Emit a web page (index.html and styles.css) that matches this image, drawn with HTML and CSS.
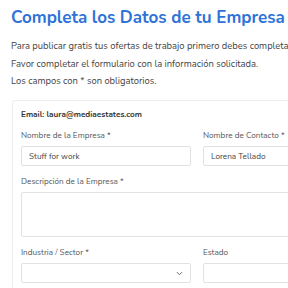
FILE: index.html
```html
<!DOCTYPE html>
<html lang="es">
<head>
    <meta charset="UTF-8">
    <meta name="viewport" content="width=device-width, initial-scale=1.0">
    <title>Completa los Datos de tu Empresa</title>
    <link rel="stylesheet" href="styles.css">
</head>
<body>
    <div id="page">
        <h1 class="page-title">Completa los Datos de tu Empresa</h1>
        <div class="intro">
            <p>Para publicar gratis tus ofertas de trabajo primero debes completar los datos de tu empresa.</p>
            <p>Favor completar el formulario con la información solicitada.</p>
            <p>Los campos con * son obligatorios.</p>
        </div>

        <div class="card">
            <div class="email">Email: laura@mediaestates.com</div>

            <div class="row">
                <div class="field">
                    <label>Nombre de la Empresa *</label>
                    <div class="input">Stuff for work</div>
                </div>
                <div class="field">
                    <label>Nombre de Contacto *</label>
                    <div class="input">Lorena Tellado</div>
                </div>
            </div>

            <div class="field">
                <label>Descripción de la Empresa *</label>
                <div class="input textarea"></div>
            </div>

            <div class="row">
                <div class="field">
                    <label>Industria / Sector *</label>
                    <div class="input select">
                        <svg class="chevron" width="7" height="5" viewBox="0 0 7 5">
                            <path d="M1 1.2 L3.5 3.7 L6 1.2" fill="none" stroke="#666" stroke-width="1"/>
                        </svg>
                    </div>
                </div>
                <div class="field">
                    <label>Estado</label>
                    <div class="input"></div>
                </div>
            </div>
        </div>
    </div>
</body>
</html>
```

FILE: styles.css
```css
html {
    overflow: hidden;
}

body {
    margin: 0;
    padding: 0;
    background: #ffffff;
    font-family: 'Nunito', 'Lato', 'Open Sans', sans-serif;
    color: #4a4a4a;
}

#page {
    width: 390px;
    padding: 4px 0 0 11px;
}

.page-title {
    margin: 0;
    font-size: 17px;
    font-weight: 700;
    color: #2f72d8;
    line-height: 28px;
    white-space: nowrap;
}

.intro {
    margin-top: 6px;
}

.intro p {
    margin: 0;
    font-size: 9.4px;
    line-height: 17.5px;
    white-space: nowrap;
    color: #444;
}

.card {
    margin-top: 9.5px;
    margin-left: 1px;
    border: 1px solid #ececec;
    border-radius: 3px;
    padding: 8px 10px 10px 8px;
}

.email {
    font-size: 8.2px;
    font-weight: 700;
    color: #333;
    line-height: 12px;
    margin-bottom: 8.5px;
}

.row {
    display: grid;
    grid-template-columns: 170px 170px;
    column-gap: 12px;
}

.field {
    margin-bottom: 9.5px;
}

.field label {
    display: block;
    font-size: 8.2px;
    line-height: 11px;
    color: #555;
    margin-bottom: 5.5px;
}

.input {
    height: 20px;
    box-sizing: border-box;
    border: 1px solid #e2e2e2;
    border-radius: 2px;
    display: flex;
    align-items: center;
    padding: 0 7px;
    font-size: 8.2px;
    color: #444;
}

.textarea {
    height: 45px;
}

.select {
    justify-content: flex-end;
}
```
